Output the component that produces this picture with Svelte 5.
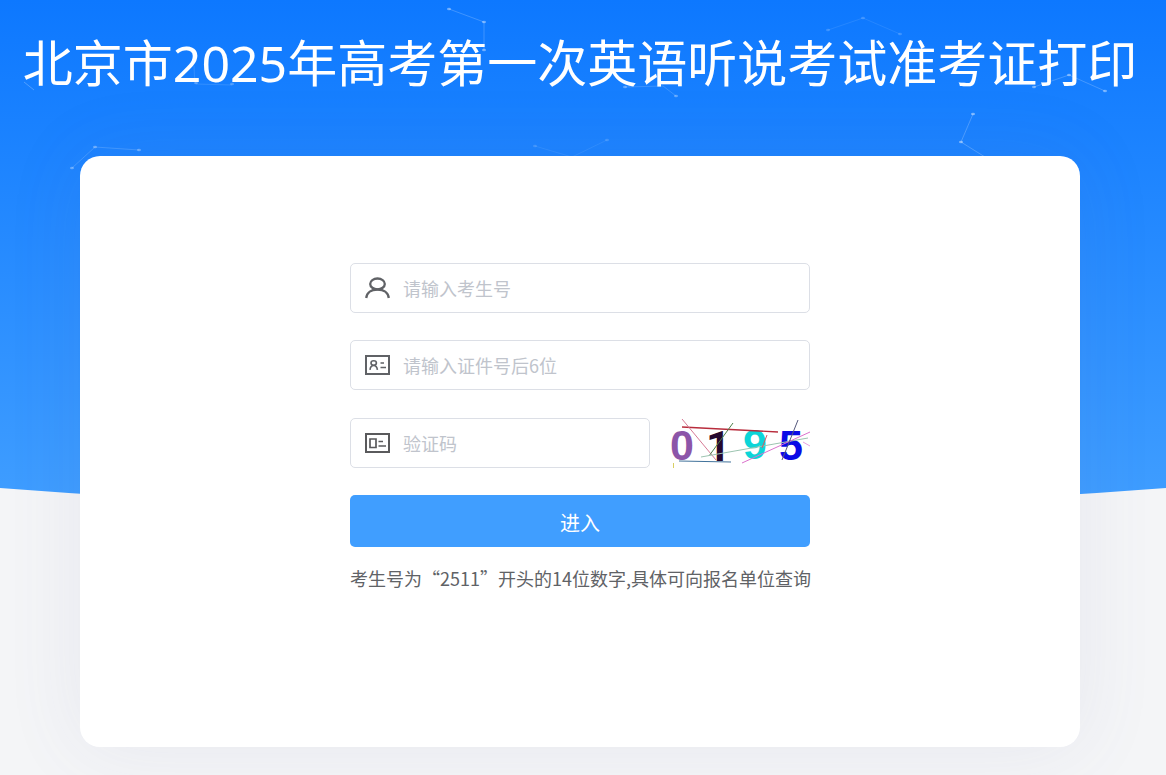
<script lang="ts">
  let candidate = $state('');
  let idTail = $state('');
  let captcha = $state('');

  const constellations = [
    { d: 'M449 9 L484 22 V50', o: 0.2, dots: [[449, 9], [484, 22], [484, 50]] },
    { d: 'M194 66 Q194 78 196 84 L232 85', o: 0.12, dots: [[196, 83], [232, 84]] },
    { d: 'M24 82 L34 90', o: 0.25, dots: [] },
    { d: 'M72 168 L95 147 L139 150', o: 0.16, dots: [[72, 168], [95, 147], [139, 150]] },
    { d: 'M535 146 L572 157 L607 140', o: 0.08, dots: [[535, 146], [607, 140]] },
    { d: 'M828 30 L863 18 L900 34', o: 0.09, dots: [[828, 30], [863, 18], [900, 34]] },
    { d: 'M625 87 L663 86 L676 96', o: 0.16, dots: [[625, 87], [676, 96]] },
    { d: 'M973 114 L961 142 L985 157', o: 0.22, dots: [[973, 114], [961, 142]] },
    { d: 'M1034 87 L1069 75 L1105 91', o: 0.2, dots: [[1034, 87], [1069, 75], [1105, 91]] }
  ];
</script>

<div class="page">
  <svg class="backdrop" viewBox="0 0 1166 512" preserveAspectRatio="none" aria-hidden="true">
    <defs>
      <linearGradient id="sky" x1="0" y1="0" x2="0" y2="1">
        <stop offset="0" stop-color="#0d78ff" />
        <stop offset="1" stop-color="#409eff" />
      </linearGradient>
    </defs>
    <path d="M0 0 H1166 V488 Q583 533 0 488 Z" fill="url(#sky)" />
    {#each constellations as c}
      <path d={c.d} fill="none" stroke="#fff" stroke-opacity={c.o} />
      {#each c.dots as [x, y]}
        <ellipse cx={x} cy={y} rx="2" ry="1.3" fill="#fff" fill-opacity={c.o * 2} />
      {/each}
    {/each}
  </svg>

  <main>
    <h1>北京市2025年高考第一次英语听说考试准考证打印</h1>
    <section class="card">
      <form onsubmit={(e) => e.preventDefault()}>
        <div class="field">
          <label for="candidate" aria-label="请输入考生号">
            <svg viewBox="0 0 25 22" fill="none" stroke="#606266" stroke-width="2.3">
              <ellipse cx="12.500" cy="6.900" rx="7.300" ry="5.400" />
              <path d="M1.200 21 C1.800 15.600 6.500 12.500 12.500 12.500 S23.200 15.600 23.800 21" />
            </svg>
          </label>
          <input id="candidate" type="text" placeholder="请输入考生号" bind:value={candidate} />
        </div>

        <div class="field">
          <label for="id-tail" aria-label="请输入证件号后6位">
            <svg viewBox="0 0 25 22" fill="none" stroke="#606266" stroke-width="2">
              <rect x="1" y="2" width="23" height="18" />
              <g stroke-width="1.6">
                <ellipse cx="8.700" cy="9" rx="2.700" ry="2.200" />
                <path d="M5 15.800 C5.300 12.800 6.700 11.500 8.700 11.500 S12 12.800 12.400 15.800 M15.500 9 H19 M15.500 13.500 H21" />
              </g>
            </svg>
          </label>
          <input id="id-tail" type="text" placeholder="请输入证件号后6位" bind:value={idTail} />
        </div>

        <div class="captcha-row">
          <div class="field">
            <label for="captcha" aria-label="验证码">
              <svg viewBox="0 0 25 22" fill="none" stroke="#5a5a5c" stroke-width="2">
                <rect x="1" y="2" width="23" height="18" />
                <path stroke-width="1.7" d="M5 7 H11 V15.500 H5 Z M13.500 9.500 H18 M13.500 14 H21" />
              </svg>
            </label>
            <input id="captcha" type="text" placeholder="验证码" bind:value={captcha} />
          </div>
          <svg class="captcha" viewBox="0 0 140 51" role="img" aria-label="验证码">
            <g class="digits">
              <text x="0" y="43" fill="#8c55a8">0</text>
              <text class="one" x="36" y="44" fill="#26082e">1</text>
              <text x="73" y="42" fill="#0cd5d8">9</text>
              <text x="109" y="43" fill="#0a0ae6">5</text>
            </g>
            <g fill="none">
              <path d="M12 10 L108 15" stroke="#b82c3c" stroke-width="1.3" />
              <path d="M12 2 L46 43" stroke="#d77b96" />
              <path d="M63 6 L39 39" stroke="#4d7f4a" />
              <path d="M9 44 L61 45" stroke="#41729b" />
              <path d="M31 40 L138 21" stroke="#9cc4b0" />
              <path d="M72 46 L140 15" stroke="#db72cc" />
              <path d="M128 3 L112 43" stroke="#55587c" />
              <path d="M97 18 L92 31" stroke="#d25a62" />
              <path d="M133 25 L140 29" stroke="#e9a0df" />
              <path d="M3.500 46 V51" stroke="#d8cf62" />
            </g>
          </svg>
        </div>

        <button type="submit">进入</button>
      </form>
      <p>考生号为“2511”开头的14位数字,具体可向报名单位查询</p>
    </section>
  </main>
</div>

<style>
  :global(body) {
    margin: 0;
    background: #f4f5f7;
  }

  .page {
    display: grid;
    grid-template-columns: minmax(0, 1fr);
    min-height: 100vh;
    overflow: hidden;
    font-family: 'Noto Sans CJK SC', sans-serif;
  }

  .backdrop,
  main {
    grid-area: 1 / 1;
  }

  .backdrop {
    width: 100%;
    height: 512px;
  }

  main {
    box-sizing: border-box;
    z-index: 1;
    padding: 26px 46px 28px 40px;
  }

  h1 {
    display: flex;
    justify-content: center;
    margin: 0 0 56px;
    color: #fff;
    font-family: 'Noto Sans', 'Noto Sans CJK SC', sans-serif;
    font-size: 50px;
    font-weight: 400;
    line-height: 74px;
    white-space: nowrap;
  }

  .card {
    box-sizing: border-box;
    max-width: 1000px;
    margin: 0 auto;
    padding: 107px 20px 156px;
    border-radius: 20px;
    background: #fff;
    box-shadow: 0 0 80px rgba(100, 100, 160, 0.09);
  }

  form,
  p {
    max-width: 460px;
    margin: 0 auto;
  }

  form {
    display: grid;
    gap: 27px;
  }

  .field {
    display: flex;
    align-items: center;
    box-sizing: border-box;
    flex: 1;
    min-width: 0;
    height: 50px;
    padding: 0 14px;
    gap: 13px;
    border: 1px solid #dcdfe6;
    border-radius: 5px;
  }

  .field label,
  .field svg {
    display: block;
    width: 25px;
    height: 22px;
  }

  input {
    flex: 1;
    min-width: 0;
    padding: 0;
    border: 0;
    outline: 0;
    background: none;
    color: #606266;
    font: 18px 'Noto Sans CJK SC', sans-serif;
  }

  input::placeholder {
    color: #c0c4cc;
    opacity: 1;
  }

  .captcha-row {
    display: flex;
    align-items: flex-end;
    gap: 20px;
  }

  .captcha {
    width: 140px;
    height: 51px;
    overflow: visible;
  }

  .digits {
    font: bold 43px 'Liberation Sans', sans-serif;
  }

  .one {
    font-family: Roboto, sans-serif;
  }

  button {
    height: 52px;
    padding: 2px 0 0;
    border: 0;
    border-radius: 5px;
    background: #409eff;
    color: #fff;
    font: 20px 'Noto Sans CJK SC', sans-serif;
    cursor: pointer;
  }

  p {
    margin-top: 18px;
    color: #606266;
    font-size: 18px;
    line-height: 26px;
    white-space: nowrap;
  }
</style>
